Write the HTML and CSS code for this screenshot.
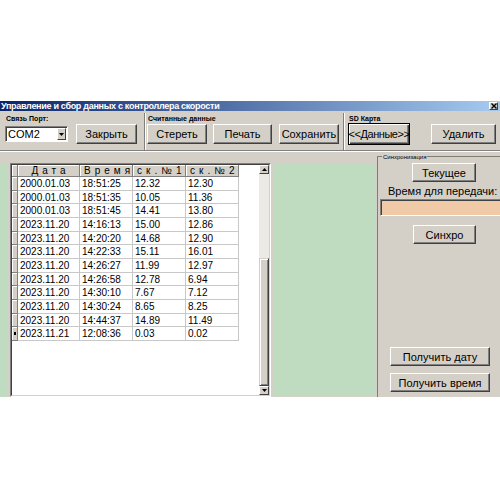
FILE: index.html
```html
<!DOCTYPE html>
<html lang="ru">
<head>
<meta charset="utf-8">
<title>Управление и сбор данных</title>
<link rel="stylesheet" href="styles.css">
</head>
<body>
<div class="window">
  <div class="titlebar">
    <span class="title">Управление и сбор данных с контроллера скорости</span>
    <span class="close"><svg width="6" height="6" viewBox="0 0 6 6"><path d="M0.5 0.5L5.5 5.5M5.5 0.5L0.5 5.5" stroke="#000" stroke-width="1.4"/></svg></span>
  </div>
  <div class="toolbar">
    <div class="grp g1">
      <div class="glabel">Связь Порт:</div>
      <div class="grow">
        <div class="combo"><span class="combo-text">COM2</span><span class="combo-btn"><svg width="5" height="3" viewBox="0 0 5 3"><path d="M0 0H5L2.5 3Z" fill="#000"/></svg></span></div>
        <div class="btn w-close">Закрыть</div>
      </div>
    </div>
    <div class="vsep"></div>
    <div class="grp g2">
      <div class="glabel">Считанные данные</div>
      <div class="grow">
        <div class="btn w-clear">Стереть</div>
        <div class="btn w-print">Печать</div>
        <div class="btn w-save">Сохранить</div>
      </div>
    </div>
    <div class="vsep"></div>
    <div class="grp g3">
      <div class="glabel">SD Карта</div>
      <div class="grow">
        <div class="btn btn-default w-data">&lt;&lt;Данные&gt;&gt;</div>
        <div class="btn w-del">Удалить</div>
      </div>
    </div>
  </div>
  <div class="main">
    <div class="leftpart">
      <div class="strip"></div>
      <div class="gridbox">
        <div class="gridinner">
          <div class="table">
            <div class="hc"></div><div class="hc">Дата</div><div class="hc">Время</div><div class="hc">ск.№1</div><div class="hc">ск.№2</div>
            <div class="ic"></div><div class="dc">2000.01.03</div><div class="dc">18:51:25</div><div class="dc">12.32</div><div class="dc">12.30</div>
            <div class="ic"></div><div class="dc">2000.01.03</div><div class="dc">18:51:35</div><div class="dc">10.05</div><div class="dc">11.36</div>
            <div class="ic"></div><div class="dc">2000.01.03</div><div class="dc">18:51:45</div><div class="dc">14.41</div><div class="dc">13.80</div>
            <div class="ic"></div><div class="dc">2023.11.20</div><div class="dc">14:16:13</div><div class="dc">15.00</div><div class="dc">12.86</div>
            <div class="ic"></div><div class="dc">2023.11.20</div><div class="dc">14:20:20</div><div class="dc">14.68</div><div class="dc">12.90</div>
            <div class="ic"></div><div class="dc">2023.11.20</div><div class="dc">14:22:33</div><div class="dc">15.11</div><div class="dc">16.01</div>
            <div class="ic"></div><div class="dc">2023.11.20</div><div class="dc">14:26:27</div><div class="dc">11.99</div><div class="dc">12.97</div>
            <div class="ic"></div><div class="dc">2023.11.20</div><div class="dc">14:26:58</div><div class="dc">12.78</div><div class="dc">6.94</div>
            <div class="ic"></div><div class="dc">2023.11.20</div><div class="dc">14:30:10</div><div class="dc">7.67</div><div class="dc">7.12</div>
            <div class="ic"></div><div class="dc">2023.11.20</div><div class="dc">14:30:24</div><div class="dc">8.65</div><div class="dc">8.25</div>
            <div class="ic"></div><div class="dc">2023.11.20</div><div class="dc">14:44:37</div><div class="dc">14.89</div><div class="dc">11.49</div>
            <div class="ic ic-cur"><span class="marker"></span></div><div class="dc">2023.11.21</div><div class="dc">12:08:36</div><div class="dc">0.03</div><div class="dc">0.02</div>
          </div>
          <div class="gridfill"></div>
          <div class="scroll">
            <div class="sbtn"><svg width="5" height="3" viewBox="0 0 5 3"><path d="M2.5 0L5 3H0Z" fill="#000"/></svg></div>
            <div class="track"></div>
            <div class="thumb"></div>
            <div class="sbtn"><svg width="5" height="3" viewBox="0 0 5 3"><path d="M0 0H5L2.5 3Z" fill="#000"/></svg></div>
          </div>
        </div>
      </div>
      <div class="greenpanel"></div>
    </div>
    <fieldset class="sync">
      <legend class="sync-legend">Синхронизация</legend>
      <div class="sync-col">
        <div class="btn w-cur">Текущее</div>
        <div class="sync-label">Время для передачи:</div>
        <div class="time-input"></div>
        <div class="btn w-sync">Синхро</div>
        <div class="sync-space"></div>
        <div class="btn w-get">Получить дату</div>
        <div class="btn w-get w-get2">Получить время</div>
      </div>
    </fieldset>
  </div>
</div>
</body>
</html>
```

FILE: styles.css
```css
* { box-sizing: border-box; }
html, body { margin: 0; padding: 0; background: #fff; }
body { font-family: "Liberation Sans", Arial, sans-serif; color: #000; }

.window {
  margin-top: 101px;
  width: 500px;
  height: 296px;
  background: #d4d0c8;
  overflow: hidden;
  display: flex;
  flex-direction: column;
}

.titlebar {
  height: 10px;
  flex-shrink: 0;
  background: linear-gradient(to right, #0a246a, #a6caf0);
  display: flex;
  align-items: center;
  justify-content: space-between;
  padding: 0 2px 0 1px;
}
.title {
  color: #fff;
  font-weight: bold;
  font-size: 9px;
  letter-spacing: -0.3px;
  line-height: 10px;
  white-space: nowrap;
}
.close {
  width: 9px;
  height: 8px;
  background: #d4d0c8;
  border: 1px solid;
  border-color: #fff #404040 #404040 #fff;
  display: flex;
  align-items: center;
  justify-content: center;
}

.toolbar {
  height: 40px;
  flex-shrink: 0;
  display: flex;
  border-bottom: 1px solid #808080;
  box-shadow: 0 1px 0 #fff;
}
.grp { padding-top: 3px; flex-shrink: 0; }
.g1 { width: 144px; padding-left: 5px; }
.g2 { width: 197px; padding-left: 1px; }
.g3 { width: 155px; padding-left: 3px; }
.glabel {
  font-size: 7px;
  font-weight: bold;
  line-height: 9px;
  height: 9px;
  white-space: nowrap;
  margin-left: 1px;
}
.grow {
  display: flex;
  align-items: center;
  height: 22px;
}
.vsep {
  width: 2px;
  height: 37px;
  margin-top: 2px;
  border-left: 1px solid #808080;
  border-right: 1px solid #fff;
  flex-shrink: 0;
}

.btn {
  background: #d4d0c8;
  border: 1px solid;
  border-color: #fff #404040 #404040 #fff;
  box-shadow: inset -1px -1px 0 #808080;
  display: flex;
  align-items: center;
  justify-content: center;
  font-size: 11px;
  height: 20px;
  white-space: nowrap;
  flex-shrink: 0;
}
.btn-default {
  border: 1px solid #000;
  box-shadow: inset 1px 1px 0 #fff, inset -1px -1px 0 #404040, inset -2px -2px 0 #808080;
  height: 22px;
  letter-spacing: -0.45px;
}

.combo {
  width: 63px;
  height: 16px;
  background: #fff;
  border: 1px solid;
  border-color: #808080 #fff #fff #808080;
  box-shadow: inset 1px 1px 0 #404040;
  display: flex;
  align-items: center;
  justify-content: space-between;
  margin-right: 8px;
  padding: 1px 1px 1px 2px;
}
.combo-text { font-size: 11px; line-height: 12px; }
.combo-btn {
  width: 9px;
  height: 12px;
  background: #d4d0c8;
  border: 1px solid;
  border-color: #fff #404040 #404040 #fff;
  display: flex;
  align-items: center;
  justify-content: center;
}
.w-close { width: 61px; }
.w-clear { width: 60px; margin-right: 6px; }
.w-print { width: 59px; margin-right: 7px; }
.w-save { width: 60px; }
.w-data { width: 62px; margin-right: 21px; }
.w-del { width: 65px; }

.main {
  flex: 1;
  display: flex;
  min-height: 0;
}
.leftpart {
  display: flex;
  padding-top: 12px;
  width: 376px;
  flex-shrink: 0;
}
.strip {
  width: 7px;
  background: #c0dcc0;
  margin-right: 3px;
  flex-shrink: 0;
}
.gridbox {
  width: 261px;
  flex-shrink: 0;
  border: 1px solid;
  border-color: #808080 #fff #fff #808080;
}
.gridinner {
  height: 100%;
  border: 1px solid;
  border-color: #404040 #d4d0c8 #d4d0c8 #404040;
  background: #fff;
  display: flex;
}
.table {
  display: grid;
  grid-template-columns: 6px 62px 53px 53px 53px;
  grid-template-rows: 12px;
  grid-auto-rows: 13.67px;
  align-content: start;
  flex-shrink: 0;
}
.hc {
  background: #d4d0c8;
  border-right: 1px solid #808080;
  border-bottom: 1px solid #808080;
  box-shadow: inset 1px 1px 0 #fff;
  font-size: 10px;
  line-height: 11px;
  text-align: center;
  letter-spacing: 4px;
  padding-left: 4px;
  white-space: nowrap;
  overflow: hidden;
}
.ic {
  background: #d4d0c8;
  border-right: 1px solid #808080;
  border-bottom: 1px solid #808080;
  box-shadow: inset 1px 1px 0 #fff;
  display: flex;
  align-items: center;
  justify-content: center;
}
.marker {
  width: 2px;
  height: 3px;
  background: #000;
}
.dc {
  border-right: 1px solid #c8c8c8;
  border-bottom: 1px solid #c8c8c8;
  font-size: 10px;
  line-height: 13px;
  padding-left: 2px;
  white-space: nowrap;
}
.gridfill { flex: 1; }
.scroll {
  width: 10px;
  display: flex;
  flex-direction: column;
  background: #eceae5;
  flex-shrink: 0;
}
.sbtn {
  height: 9px;
  background: #d4d0c8;
  border: 1px solid;
  border-color: #fff #404040 #404040 #fff;
  display: flex;
  align-items: center;
  justify-content: center;
  flex-shrink: 0;
}
.track { flex: 1; }
.thumb {
  height: 128px;
  background: #d4d0c8;
  border: 1px solid;
  border-color: #d4d0c8 #404040 #404040 #d4d0c8;
  box-shadow: inset 1px 1px 0 #fff, inset -1px -1px 0 #808080;
}
.greenpanel {
  width: 103px;
  margin-left: 2px;
  margin-top: 1px;
  margin-bottom: 1px;
  background: #c0dcc0;
  flex-shrink: 0;
}

.sync {
  width: 130px;
  flex-shrink: 0;
  margin: 2px 0 0 1px;
  padding: 0 0 0 1px;
  border: 2px groove #d4d0c8;
  border-right: none;
  border-bottom: none;
  min-width: 0;
}
.sync-legend {
  font-size: 6px;
  line-height: 8px;
  padding: 0 1px;
  margin-left: 2px;
}
.sync-col {
  display: flex;
  flex-direction: column;
  align-items: flex-start;
  height: 235px;
}
.w-cur { width: 64px; height: 19px; margin: 2px 0 0 32px; }
.sync-label {
  font-size: 11px;
  line-height: 12px;
  margin: 3px 0 0 8px;
  white-space: nowrap;
}
.time-input {
  width: 125px;
  height: 17px;
  margin-top: 2px;
  background: #f0caa6;
  border: 1px solid;
  border-color: #808080 #fff #fff #808080;
  box-shadow: inset 1px 1px 0 #404040;
}
.w-sync { width: 63px; height: 19px; margin: 9px 0 0 33px; }
.sync-space { flex: 1; }
.w-get { width: 100px; height: 19px; margin-left: 10px; }
.w-get2 { margin-top: 7px; margin-bottom: 4px; }
```
